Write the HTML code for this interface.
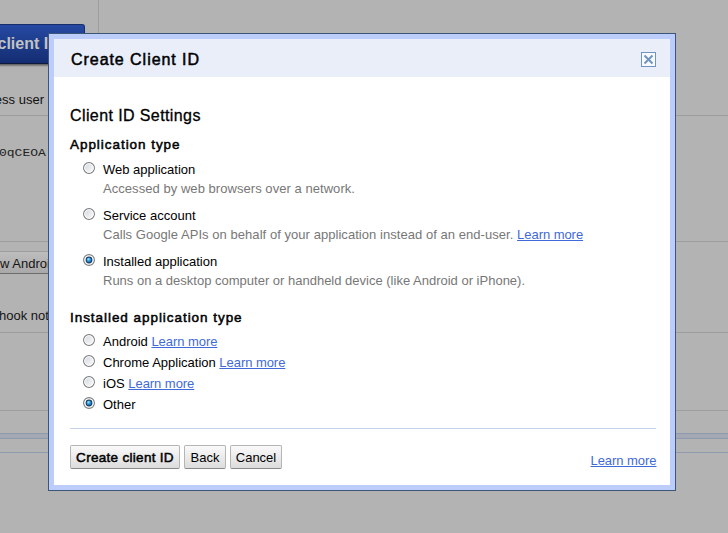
<!DOCTYPE html>
<html><head><meta charset="utf-8">
<style>
*{box-sizing:border-box}
html,body{margin:0;padding:0}
body{width:728px;height:533px;overflow:hidden;position:relative;background:#b3b3b3;font-family:"Liberation Sans",sans-serif;font-size:13px;color:#000}
.a{position:absolute;white-space:nowrap}
.hl{position:absolute;height:1px;background:#9d9d9d}
.bt{position:absolute;line-height:13px}
#dlg{position:absolute;left:48px;top:33px;width:628px;height:458px;border:1px solid #3b5677;background:#bccdfc;padding:5px}
#ttl{position:absolute;left:5px;top:5px;width:616px;height:38px;background:#e9eef9}
#cnt{position:absolute;left:5px;top:43px;width:616px;height:408px;background:#fff}
.t{position:absolute;white-space:nowrap;line-height:16px}
.radio{position:absolute;left:83px;width:12px;height:12px}
.desc{color:#777;letter-spacing:0.05px}
a{color:#3f6ad8;text-decoration:underline;letter-spacing:-0.05px}
.btn{position:absolute;top:445px;height:24px;border:1px solid #b5b5b5;border-bottom-color:#8a8a8a;border-radius:2px;background:linear-gradient(#fafafa,#dcdcdc);text-align:center;line-height:22px;font-size:13px}
</style></head><body>
<svg width="0" height="0" style="position:absolute"><defs>
<linearGradient id="rg" x1="0" y1="0" x2="1" y2="1"><stop offset="0" stop-color="#cdd2d9"/><stop offset="0.6" stop-color="#eceef0"/><stop offset="1" stop-color="#fafafa"/></linearGradient>
<radialGradient id="rb" cx="0.4" cy="0.35" r="0.7"><stop offset="0" stop-color="#a8e4ff"/><stop offset="0.5" stop-color="#2a9ae0"/><stop offset="1" stop-color="#0d5b9c"/></radialGradient>
</defs></svg>
<!-- background page (under overlay) -->
<div class="a" style="left:98px;top:0;width:1px;height:40px;background:#9e9e9e"></div>
<div class="a" style="left:0;top:24px;width:85px;height:40px;border:1px solid #17306c;border-bottom-color:#0f1a3e;border-left:0;border-radius:0 3px 0 0;background:linear-gradient(#2649a2,#142d72)"></div>
<div class="a" style="left:0;top:64px;width:85px;height:3px;background:linear-gradient(rgba(0,0,0,0.5),rgba(0,0,0,0))"></div>
<div class="a" style="left:-2.5px;top:34px;font-weight:bold;font-size:16px;line-height:20px;color:#c2c2c2">client I</div>
<div class="a" style="left:-56px;top:92px;width:100px;text-align:right;line-height:16px;color:#111">cess user</div>
<div class="hl" style="left:0;top:115px;width:728px"></div>
<div class="a" style="left:-1px;top:145px;font-family:'Liberation Mono',monospace;line-height:16px;color:#222;transform:scaleY(0.88);transform-origin:0 12px">0qCEOA</div>
<div class="hl" style="left:0;top:241px;width:728px"></div>
<div class="hl" style="left:0;top:251px;width:60px"></div>
<div class="a" style="left:0;top:252px;width:60px;height:22px;background:linear-gradient(#bdbdbd,#a9a9a9);border-bottom:1px solid #6c6c6c"></div>
<div class="a" style="left:0;top:256px;line-height:16px;color:#141414">w Android</div>
<div class="a" style="left:-1px;top:308px;line-height:16px;color:#141414">hook not</div>
<div class="hl" style="left:0;top:332px;width:728px"></div>
<div class="hl" style="left:0;top:410px;width:728px"></div>
<div class="a" style="left:0;top:433px;width:728px;height:6px;background:#a4a8b2;border-top:1px solid #8e99ad;border-bottom:1px solid #8e99ad"></div>
<div class="a" style="left:0;top:452px;width:728px;height:1px;background:#8f9aad"></div>

<div id="dlg">
  <div id="ttl">
    <div class="t" style="left:17px;top:10.5px;font-size:16px;letter-spacing:0.95px;line-height:20px;-webkit-text-stroke:0.5px #000">Create Client ID</div>
    <div class="a" style="left:587px;top:13px;width:15px;height:15px;border:1px solid #6f93c2;background:#f8faff">
      <svg width="13" height="13" style="position:absolute;left:0;top:0" viewBox="0 0 13 13"><path d="M2.5 2.5L10.5 10.5M10.5 2.5L2.5 10.5" stroke="#6f93c2" stroke-width="2"/></svg>
    </div>
  </div>
  <div id="cnt"></div>
</div>

<!-- dialog content, absolute page coordinates -->
<div class="t" style="left:70px;top:106px;font-size:16px;letter-spacing:0.4px;line-height:20px;-webkit-text-stroke:0.3px #000">Client ID Settings</div>
<div class="t" style="left:70px;top:137px;font-size:13.5px;letter-spacing:0.95px;-webkit-text-stroke:0.5px #000">Application type</div>

<svg class="radio" style="top:162px" viewBox="0 0 12 12"><circle cx="6" cy="6" r="5.4" fill="url(#rg)" stroke="#7d7e80" stroke-width="1.15"/><circle cx="6" cy="6" r="4.3" fill="none" stroke="#fff" stroke-width="0.9"/></svg>
<div class="t" style="left:103px;top:162px">Web application</div>
<div class="t desc" style="left:103px;top:181px">Accessed by web browsers over a network.</div>

<svg class="radio" style="top:208px" viewBox="0 0 12 12"><circle cx="6" cy="6" r="5.4" fill="url(#rg)" stroke="#7d7e80" stroke-width="1.15"/><circle cx="6" cy="6" r="4.3" fill="none" stroke="#fff" stroke-width="0.9"/></svg>
<div class="t" style="left:103px;top:208px">Service account</div>
<div class="t desc" style="left:103px;top:227px">Calls Google APIs on behalf of your application instead of an end-user. <a>Learn more</a></div>

<svg class="radio" style="top:254px" viewBox="0 0 12 12"><circle cx="6" cy="6" r="5.4" fill="#fff" stroke="#7d7e80" stroke-width="1.15"/><circle cx="6" cy="6" r="3.4" fill="#16385a"/><circle cx="6" cy="6" r="2.5" fill="url(#rb)"/></svg>
<div class="t" style="left:103px;top:254px">Installed application</div>
<div class="t desc" style="left:103px;top:273px;letter-spacing:0">Runs on a desktop computer or handheld device (like Android or iPhone).</div>

<div class="t" style="left:70px;top:310px;font-size:13.5px;letter-spacing:0.95px;-webkit-text-stroke:0.5px #000">Installed application type</div>

<svg class="radio" style="top:334px" viewBox="0 0 12 12"><circle cx="6" cy="6" r="5.4" fill="url(#rg)" stroke="#7d7e80" stroke-width="1.15"/><circle cx="6" cy="6" r="4.3" fill="none" stroke="#fff" stroke-width="0.9"/></svg>
<div class="t" style="left:103px;top:334px">Android <a>Learn more</a></div>
<svg class="radio" style="top:355px" viewBox="0 0 12 12"><circle cx="6" cy="6" r="5.4" fill="url(#rg)" stroke="#7d7e80" stroke-width="1.15"/><circle cx="6" cy="6" r="4.3" fill="none" stroke="#fff" stroke-width="0.9"/></svg>
<div class="t" style="left:103px;top:355px">Chrome Application <a>Learn more</a></div>
<svg class="radio" style="top:376px" viewBox="0 0 12 12"><circle cx="6" cy="6" r="5.4" fill="url(#rg)" stroke="#7d7e80" stroke-width="1.15"/><circle cx="6" cy="6" r="4.3" fill="none" stroke="#fff" stroke-width="0.9"/></svg>
<div class="t" style="left:103px;top:376px">iOS <a>Learn more</a></div>
<svg class="radio" style="top:397px" viewBox="0 0 12 12"><circle cx="6" cy="6" r="5.4" fill="#fff" stroke="#7d7e80" stroke-width="1.15"/><circle cx="6" cy="6" r="3.4" fill="#16385a"/><circle cx="6" cy="6" r="2.5" fill="url(#rb)"/></svg>
<div class="t" style="left:103px;top:397px">Other</div>

<div class="a" style="left:70px;top:428px;width:586px;height:1px;background:#c5d3ea"></div>

<div class="btn" style="left:70px;width:110px;font-size:13.5px;letter-spacing:0.3px;-webkit-text-stroke:0.5px #000;line-height:23px">Create client ID</div>
<div class="btn" style="left:184px;width:42px;line-height:23px">Back</div>
<div class="btn" style="left:230px;width:52px;line-height:23px">Cancel</div>
<div class="t" style="left:590.5px;top:453px"><a>Learn more</a></div>
</body></html>
